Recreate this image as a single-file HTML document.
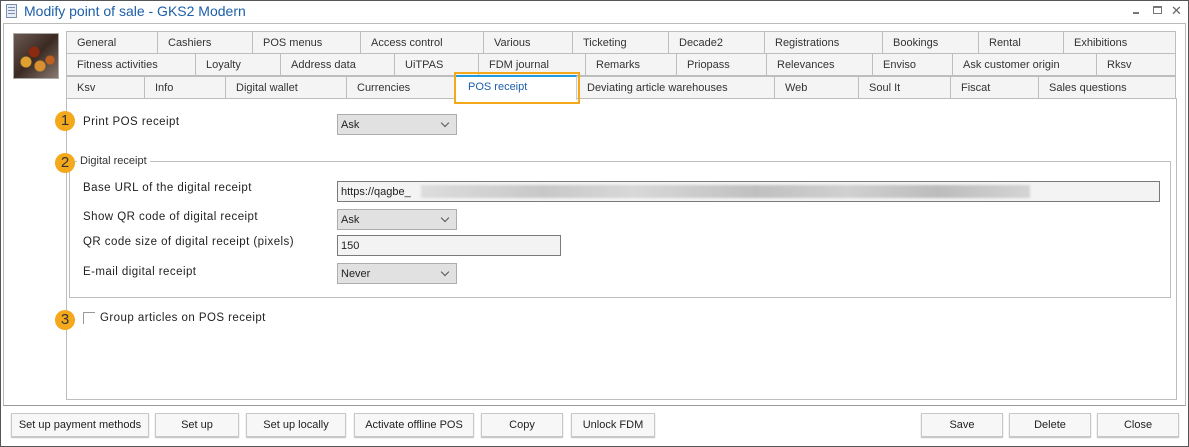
<!DOCTYPE html>
<html><head><meta charset="utf-8"><style>
*{box-sizing:border-box;margin:0;padding:0}
body{width:1189px;height:447px;background:#fff;font-family:"Liberation Sans",sans-serif;font-size:11px;color:#222;position:relative;overflow:hidden}
.a{position:absolute}
.win{left:0;top:0;width:1189px;height:447px;border:1px solid #555}
.title{left:24px;top:3px;font-size:14px;color:#1c5fa8}
.tab{position:absolute;height:23px;border:1px solid #bdbdbd;background:#f4f4f4;font-size:11px;color:#333;padding:5px 0 0 10px;white-space:nowrap;overflow:hidden}
.badge{position:absolute;width:20px;height:20px;border-radius:50%;background:#f4a81c;color:#333;font-size:15px;text-align:center;line-height:20px}
.lbl{position:absolute;font-size:11.5px;color:#222;letter-spacing:0.45px}
.sel{position:absolute;width:120px;height:21px;background:#e1e1e1;border:1px solid #adadad;padding:4px 0 0 3px;font-size:11px}
.sel:after{content:"";position:absolute;right:8px;top:5px;width:5px;height:5px;border-right:1px solid #555;border-bottom:1px solid #555;transform:rotate(45deg)}
.inp{position:absolute;height:21px;background:#f3f3f3;border:1px solid #7a7a7a;padding:4px 0 0 3px;font-size:11px}
.btn{position:absolute;top:413px;height:24px;border:1px solid #c8c8c8;background:#f7f7f7;box-shadow:0 1px 1px #bbb;text-align:center;line-height:22px;font-size:11px;color:#222}
</style></head><body>
<div class="a win"></div>
<div class="a" style="left:6px;top:4px;width:11px;height:14px;border:1px solid #7d8fb0;background:#e8ecf4"></div>
<div class="a" style="left:8px;top:7px;width:7px;height:1px;background:#7d8fb0;box-shadow:0 3px 0 #7d8fb0,0 6px 0 #7d8fb0"></div>
<div class="a title">Modify point of sale - GKS2 Modern</div>
<div class="a" style="left:1133px;top:12px;width:6px;height:2px;background:#777"></div>
<div class="a" style="left:1153px;top:6px;width:9px;height:8px;border:1px solid #777;border-top-width:2px"></div>
<div class="a" style="left:1171px;top:3px;font-size:13px;color:#666">✕</div>
<div class="a" style="left:3px;top:23px;width:1183px;height:383px;border:1px solid #bbb;border-bottom:1px solid #999"></div>
<div class="a" style="left:13px;top:33px;width:46px;height:46px;border:1px solid #aaa;background:radial-gradient(circle at 20px 18px,#8a2a10 5px,transparent 6px),radial-gradient(circle at 12px 28px,#e0a030 5px,transparent 6px),radial-gradient(circle at 26px 32px,#d89030 5px,transparent 6px),radial-gradient(circle at 36px 26px,#c06020 4px,transparent 5px),linear-gradient(135deg,#6a5a50,#3a2a22 50%,#8a7a70)"></div>

<div class="tab" style="left:66px;top:31px;width:92px">General</div>
<div class="tab" style="left:157px;top:31px;width:96px">Cashiers</div>
<div class="tab" style="left:252px;top:31px;width:109px">POS menus</div>
<div class="tab" style="left:360px;top:31px;width:124px">Access control</div>
<div class="tab" style="left:483px;top:31px;width:90px">Various</div>
<div class="tab" style="left:572px;top:31px;width:97px">Ticketing</div>
<div class="tab" style="left:668px;top:31px;width:97px">Decade2</div>
<div class="tab" style="left:764px;top:31px;width:119px">Registrations</div>
<div class="tab" style="left:882px;top:31px;width:97px">Bookings</div>
<div class="tab" style="left:978px;top:31px;width:86px">Rental</div>
<div class="tab" style="left:1063px;top:31px;width:113px">Exhibitions</div>
<div class="tab" style="left:66px;top:53px;width:130px">Fitness activities</div>
<div class="tab" style="left:195px;top:53px;width:86px">Loyalty</div>
<div class="tab" style="left:280px;top:53px;width:115px">Address data</div>
<div class="tab" style="left:394px;top:53px;width:85px">UiTPAS</div>
<div class="tab" style="left:478px;top:53px;width:108px">FDM journal</div>
<div class="tab" style="left:585px;top:53px;width:92px">Remarks</div>
<div class="tab" style="left:676px;top:53px;width:91px">Priopass</div>
<div class="tab" style="left:766px;top:53px;width:107px">Relevances</div>
<div class="tab" style="left:872px;top:53px;width:81px">Enviso</div>
<div class="tab" style="left:952px;top:53px;width:145px">Ask customer origin</div>
<div class="tab" style="left:1096px;top:53px;width:80px">Rksv</div>
<div class="tab" style="left:66px;top:76px;width:79px">Ksv</div>
<div class="tab" style="left:144px;top:76px;width:82px">Info</div>
<div class="tab" style="left:225px;top:76px;width:122px">Digital wallet</div>
<div class="tab" style="left:346px;top:76px;width:110px">Currencies</div>
<div class="tab" style="left:576px;top:76px;width:199px">Deviating article warehouses</div>
<div class="tab" style="left:774px;top:76px;width:85px">Web</div>
<div class="tab" style="left:858px;top:76px;width:93px">Soul It</div>
<div class="tab" style="left:950px;top:76px;width:89px">Fiscat</div>
<div class="tab" style="left:1038px;top:76px;width:138px">Sales questions</div>
<div class="a" style="left:66px;top:98px;width:1111px;height:302px;border:1px solid #bdbdbd;background:#fff"></div>
<div class="a" style="left:456px;top:75px;width:121px;height:25px;background:#fff;border-top:2px solid #1e9ae0;border-right:1px solid #ccc;padding:4px 0 0 12px;font-size:11px;color:#1c5fa8">POS receipt</div>
<div class="a" style="left:454px;top:72px;width:126px;height:32px;border:2px solid #f4a81c"></div>

<div class="badge" style="left:55px;top:111px">1</div>
<div class="lbl" style="left:83px;top:116px">Print POS receipt</div>
<div class="sel" style="left:337px;top:114px">Ask</div>

<div class="a" style="left:69px;top:161px;width:1102px;height:137px;border:1px solid #bdbdbd"></div>
<div class="a" style="left:77px;top:155px;background:#fff;padding:0 3px;font-size:11px;color:#333">Digital receipt</div>
<div class="badge" style="left:55px;top:153px">2</div>
<div class="lbl" style="left:83px;top:182px">Base URL of the digital receipt</div>
<div class="inp" style="left:337px;top:181px;width:823px">https://qagbe_</div>
<div class="a" style="left:421px;top:185px;width:609px;height:13px;background:linear-gradient(90deg,#ddd,#c8c8c8 20%,#d8d8d8 35%,#c0c0c0 55%,#d0d0d0 70%,#bcbcbc 85%,#d4d4d4);filter:blur(1px)"></div>
<div class="lbl" style="left:83px;top:211px">Show QR code of digital receipt</div>
<div class="sel" style="left:337px;top:209px">Ask</div>
<div class="lbl" style="left:83px;top:236px">QR code size of digital receipt (pixels)</div>
<div class="inp" style="left:337px;top:235px;width:224px">150</div>
<div class="lbl" style="left:83px;top:266px">E-mail digital receipt</div>
<div class="sel" style="left:337px;top:263px">Never</div>

<div class="badge" style="left:55px;top:310px">3</div>
<div class="a" style="left:83px;top:312px;width:12px;height:12px;border-top:1px solid #999;border-left:1px solid #999"></div>
<div class="lbl" style="left:100px;top:312px">Group articles on POS receipt</div>

<div class="btn" style="left:11px;width:138px">Set up payment methods</div>
<div class="btn" style="left:155px;width:84px">Set up</div>
<div class="btn" style="left:246px;width:100px">Set up locally</div>
<div class="btn" style="left:354px;width:120px">Activate offline POS</div>
<div class="btn" style="left:481px;width:82px">Copy</div>
<div class="btn" style="left:571px;width:84px">Unlock FDM</div>
<div class="btn" style="left:921px;width:82px">Save</div>
<div class="btn" style="left:1009px;width:82px">Delete</div>
<div class="btn" style="left:1097px;width:82px">Close</div>
</body></html>
